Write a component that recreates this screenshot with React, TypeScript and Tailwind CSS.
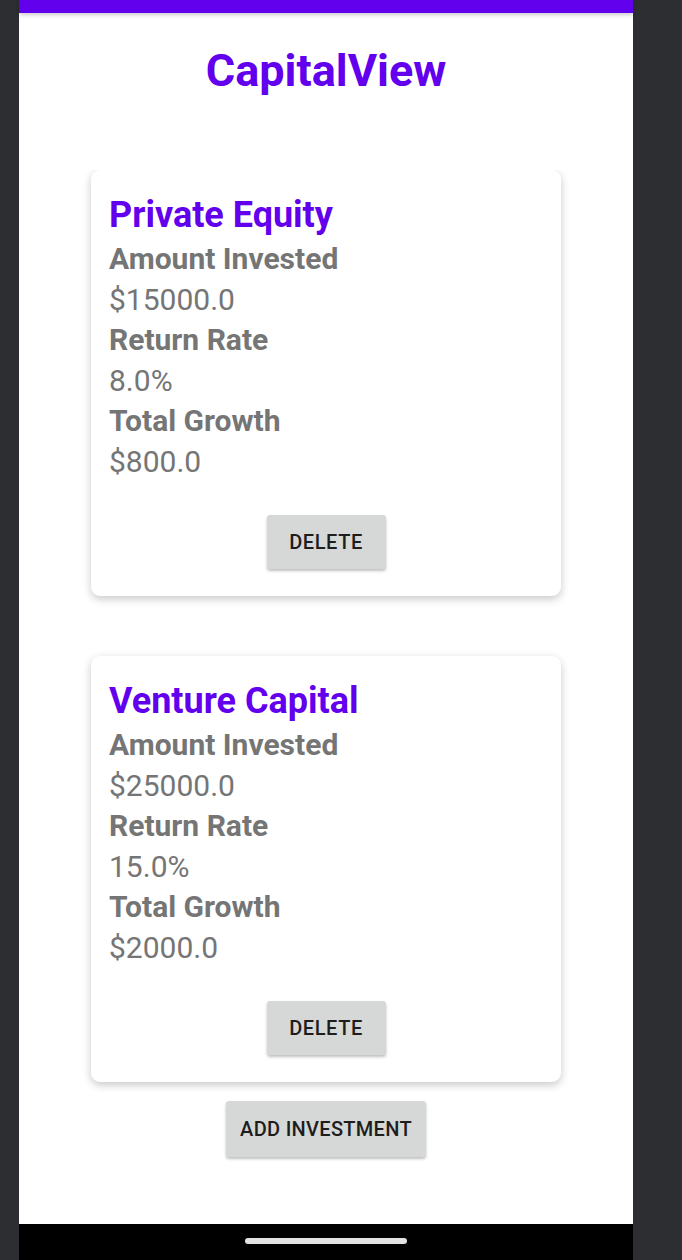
import React from 'react'

type Investment = {
  name: string
  amount: string
  rate: string
  growth: string
}

const investments: Investment[] = [
  { name: 'Private Equity', amount: '$15000.0', rate: '8.0%', growth: '$800.0' },
  { name: 'Venture Capital', amount: '$25000.0', rate: '15.0%', growth: '$2000.0' },
]

function InvestmentCard({ item }: { item: Investment }) {
  return (
    <div className="mx-auto w-[470px] rounded-[9px] bg-white px-[18px] pt-[22px] pb-[27px] shadow-[0_3px_9px_rgba(0,0,0,0.22)]">
      <h2 className="text-[36px] font-bold leading-[47px] text-[#6200ee]">{item.name}</h2>
      <p className="text-[30px] font-bold leading-[40.5px] text-[#757575]">Amount Invested</p>
      <p className="text-[30px] leading-[40.5px] text-[#757575]">{item.amount}</p>
      <p className="text-[30px] font-bold leading-[40.5px] text-[#757575]">Return Rate</p>
      <p className="text-[30px] leading-[40.5px] text-[#757575]">{item.rate}</p>
      <p className="text-[30px] font-bold leading-[40.5px] text-[#757575]">Total Growth</p>
      <p className="text-[30px] leading-[40.5px] text-[#757575]">{item.growth}</p>
      <div className="mt-[33px] flex justify-center">
        <button className="h-[54px] w-[119px] rounded-[3px] bg-[#d6d7d7] text-[20px] font-medium tracking-[0.6px] text-[#1d1d1d] shadow-[0_2px_3px_rgba(0,0,0,0.25)]">
          DELETE
        </button>
      </div>
    </div>
  )
}

export default function App() {
  return (
    <div
      className="flex h-[1260px] w-full bg-[#2c2e32]"
      style={{ fontFamily: 'Roboto, "Noto Sans", sans-serif' }}
    >
      <div className="w-[19px] shrink-0" />
      <div className="flex w-[614px] shrink-0 flex-col bg-white">
        <div className="h-[13px] shrink-0 bg-[#6200ee] shadow-[0_2px_4px_rgba(0,0,0,0.2)]" />
        <h1 className="mt-[33px] text-center text-[45px] font-bold leading-[50px] text-[#6200ee]">
          CapitalView
        </h1>
        <div className="mt-[74px] h-[922px] shrink-0 overflow-hidden">
          <div className="flex flex-col gap-[60px]">
            {investments.map((item) => (
              <InvestmentCard key={item.name} item={item} />
            ))}
          </div>
        </div>
        <div className="mt-[9px] flex justify-center">
          <button className="h-[56px] w-[200px] rounded-[3px] bg-[#d6d7d7] text-[20px] font-medium tracking-[0.3px] text-[#1d1d1d] shadow-[0_2px_3px_rgba(0,0,0,0.25)]">
            ADD INVESTMENT
          </button>
        </div>
        <div className="flex-1" />
        <div className="flex h-[36px] shrink-0 items-start justify-center bg-black pt-[14px]">
          <div className="h-[6px] w-[162px] rounded-full bg-[#e3e3e3]" />
        </div>
      </div>
      <div className="flex-1" />
    </div>
  )
}
